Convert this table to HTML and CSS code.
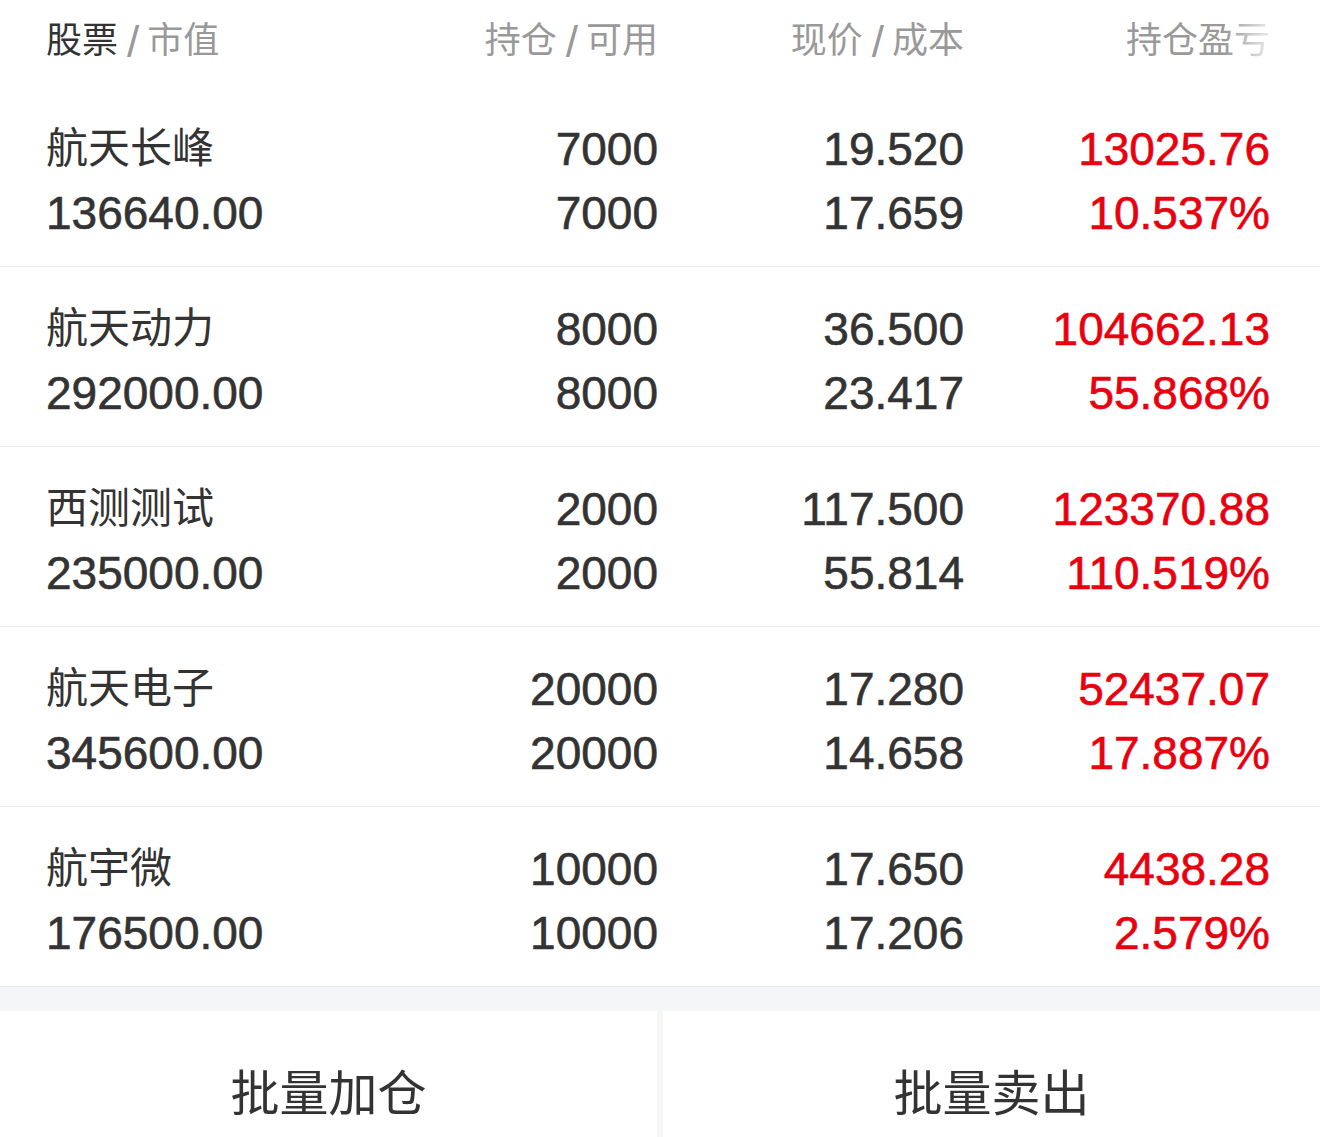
FILE: index.html
```html
<!DOCTYPE html>
<html lang="zh-CN">
<head>
<meta charset="utf-8">
<title>持仓</title>
<link rel="stylesheet" href="styles.css">
</head>
<body>
<div class="page">
  <div class="head">
    <div class="hcell left"><span class="strong">股票</span><span class="sep">/</span>市值</div>
    <div class="hcell">持仓<span class="sep">/</span>可用</div>
    <div class="hcell">现价<span class="sep">/</span>成本</div>
    <div class="hcell">持仓盈亏</div>
    <div class="fade"></div>
  </div>

  <div class="row">
    <div class="cell left"><div class="name">航天长峰</div><div class="num">136640.00</div></div>
    <div class="cell"><div class="num">7000</div><div class="num">7000</div></div>
    <div class="cell"><div class="num">19.520</div><div class="num">17.659</div></div>
    <div class="cell red"><div class="num">13025.76</div><div class="num">10.537%</div></div>
  </div>
  <div class="row">
    <div class="cell left"><div class="name">航天动力</div><div class="num">292000.00</div></div>
    <div class="cell"><div class="num">8000</div><div class="num">8000</div></div>
    <div class="cell"><div class="num">36.500</div><div class="num">23.417</div></div>
    <div class="cell red"><div class="num">104662.13</div><div class="num">55.868%</div></div>
  </div>
  <div class="row">
    <div class="cell left"><div class="name">西测测试</div><div class="num">235000.00</div></div>
    <div class="cell"><div class="num">2000</div><div class="num">2000</div></div>
    <div class="cell"><div class="num">117.500</div><div class="num">55.814</div></div>
    <div class="cell red"><div class="num">123370.88</div><div class="num">110.519%</div></div>
  </div>
  <div class="row">
    <div class="cell left"><div class="name">航天电子</div><div class="num">345600.00</div></div>
    <div class="cell"><div class="num">20000</div><div class="num">20000</div></div>
    <div class="cell"><div class="num">17.280</div><div class="num">14.658</div></div>
    <div class="cell red"><div class="num">52437.07</div><div class="num">17.887%</div></div>
  </div>
  <div class="row">
    <div class="cell left"><div class="name">航宇微</div><div class="num">176500.00</div></div>
    <div class="cell"><div class="num">10000</div><div class="num">10000</div></div>
    <div class="cell"><div class="num">17.650</div><div class="num">17.206</div></div>
    <div class="cell red"><div class="num">4438.28</div><div class="num">2.579%</div></div>
  </div>

  <div class="band"></div>
  <div class="actions">
    <div class="btn">批量加仓</div>
    <div class="btn">批量卖出</div>
  </div>
</div>
</body>
</html>
```

FILE: styles.css
```css
html, body {
  margin: 0;
  padding: 0;
  background: #ffffff;
}
body {
  font-family: "Liberation Sans", "Noto Sans CJK SC", sans-serif;
  color: #333333;
  width: 1320px;
  height: 1137px;
  overflow: hidden;
}
.page {
  display: flex;
  flex-direction: column;
}
.head {
  position: relative;
  display: grid;
  grid-template-columns: repeat(4, 306px);
  padding: 0 50px 0 46px;
  height: 87px;
  align-items: center;
  font-size: 36px;
  color: #999999;
}
.hcell {
  text-align: right;
  line-height: 40px;
  padding-bottom: 6px;
}
.hcell.left {
  text-align: left;
}
.strong {
  color: #333333;
}
.sep {
  display: inline-block;
  margin: 0 8px 0 9px;
  font-size: 44px;
  line-height: 40px;
  vertical-align: top;
  transform: translateY(1px);
}
.fade {
  position: absolute;
  right: 0;
  top: 0;
  width: 96px;
  height: 87px;
  background: linear-gradient(to right, rgba(255,255,255,0) 0%, rgba(255,255,255,0.75) 45%, #ffffff 70%);
}
.row {
  display: grid;
  grid-template-columns: repeat(4, 306px);
  padding: 30px 50px 21px 46px;
  border-bottom: 1px solid #ececec;
  height: 128px;
}
.cell {
  text-align: right;
  display: flex;
  flex-direction: column;
}
.cell.left {
  text-align: left;
}
.cell.red {
  color: #e8000f;
}
.name {
  font-size: 42px;
  line-height: 64px;
  height: 64px;
}
.num {
  font-size: 46px;
  line-height: 64px;
  height: 64px;
  -webkit-text-stroke: 0.6px currentColor;
}
.band {
  height: 24px;
  background: #f5f6f8;
}
.actions {
  display: flex;
  gap: 6px;
  background: #f5f6f8;
}
.btn {
  flex: 1;
  height: 156px;
  background: #ffffff;
  display: flex;
  align-items: center;
  justify-content: center;
  font-size: 49px;
  color: #333333;
  padding-bottom: 8px;
}
```
